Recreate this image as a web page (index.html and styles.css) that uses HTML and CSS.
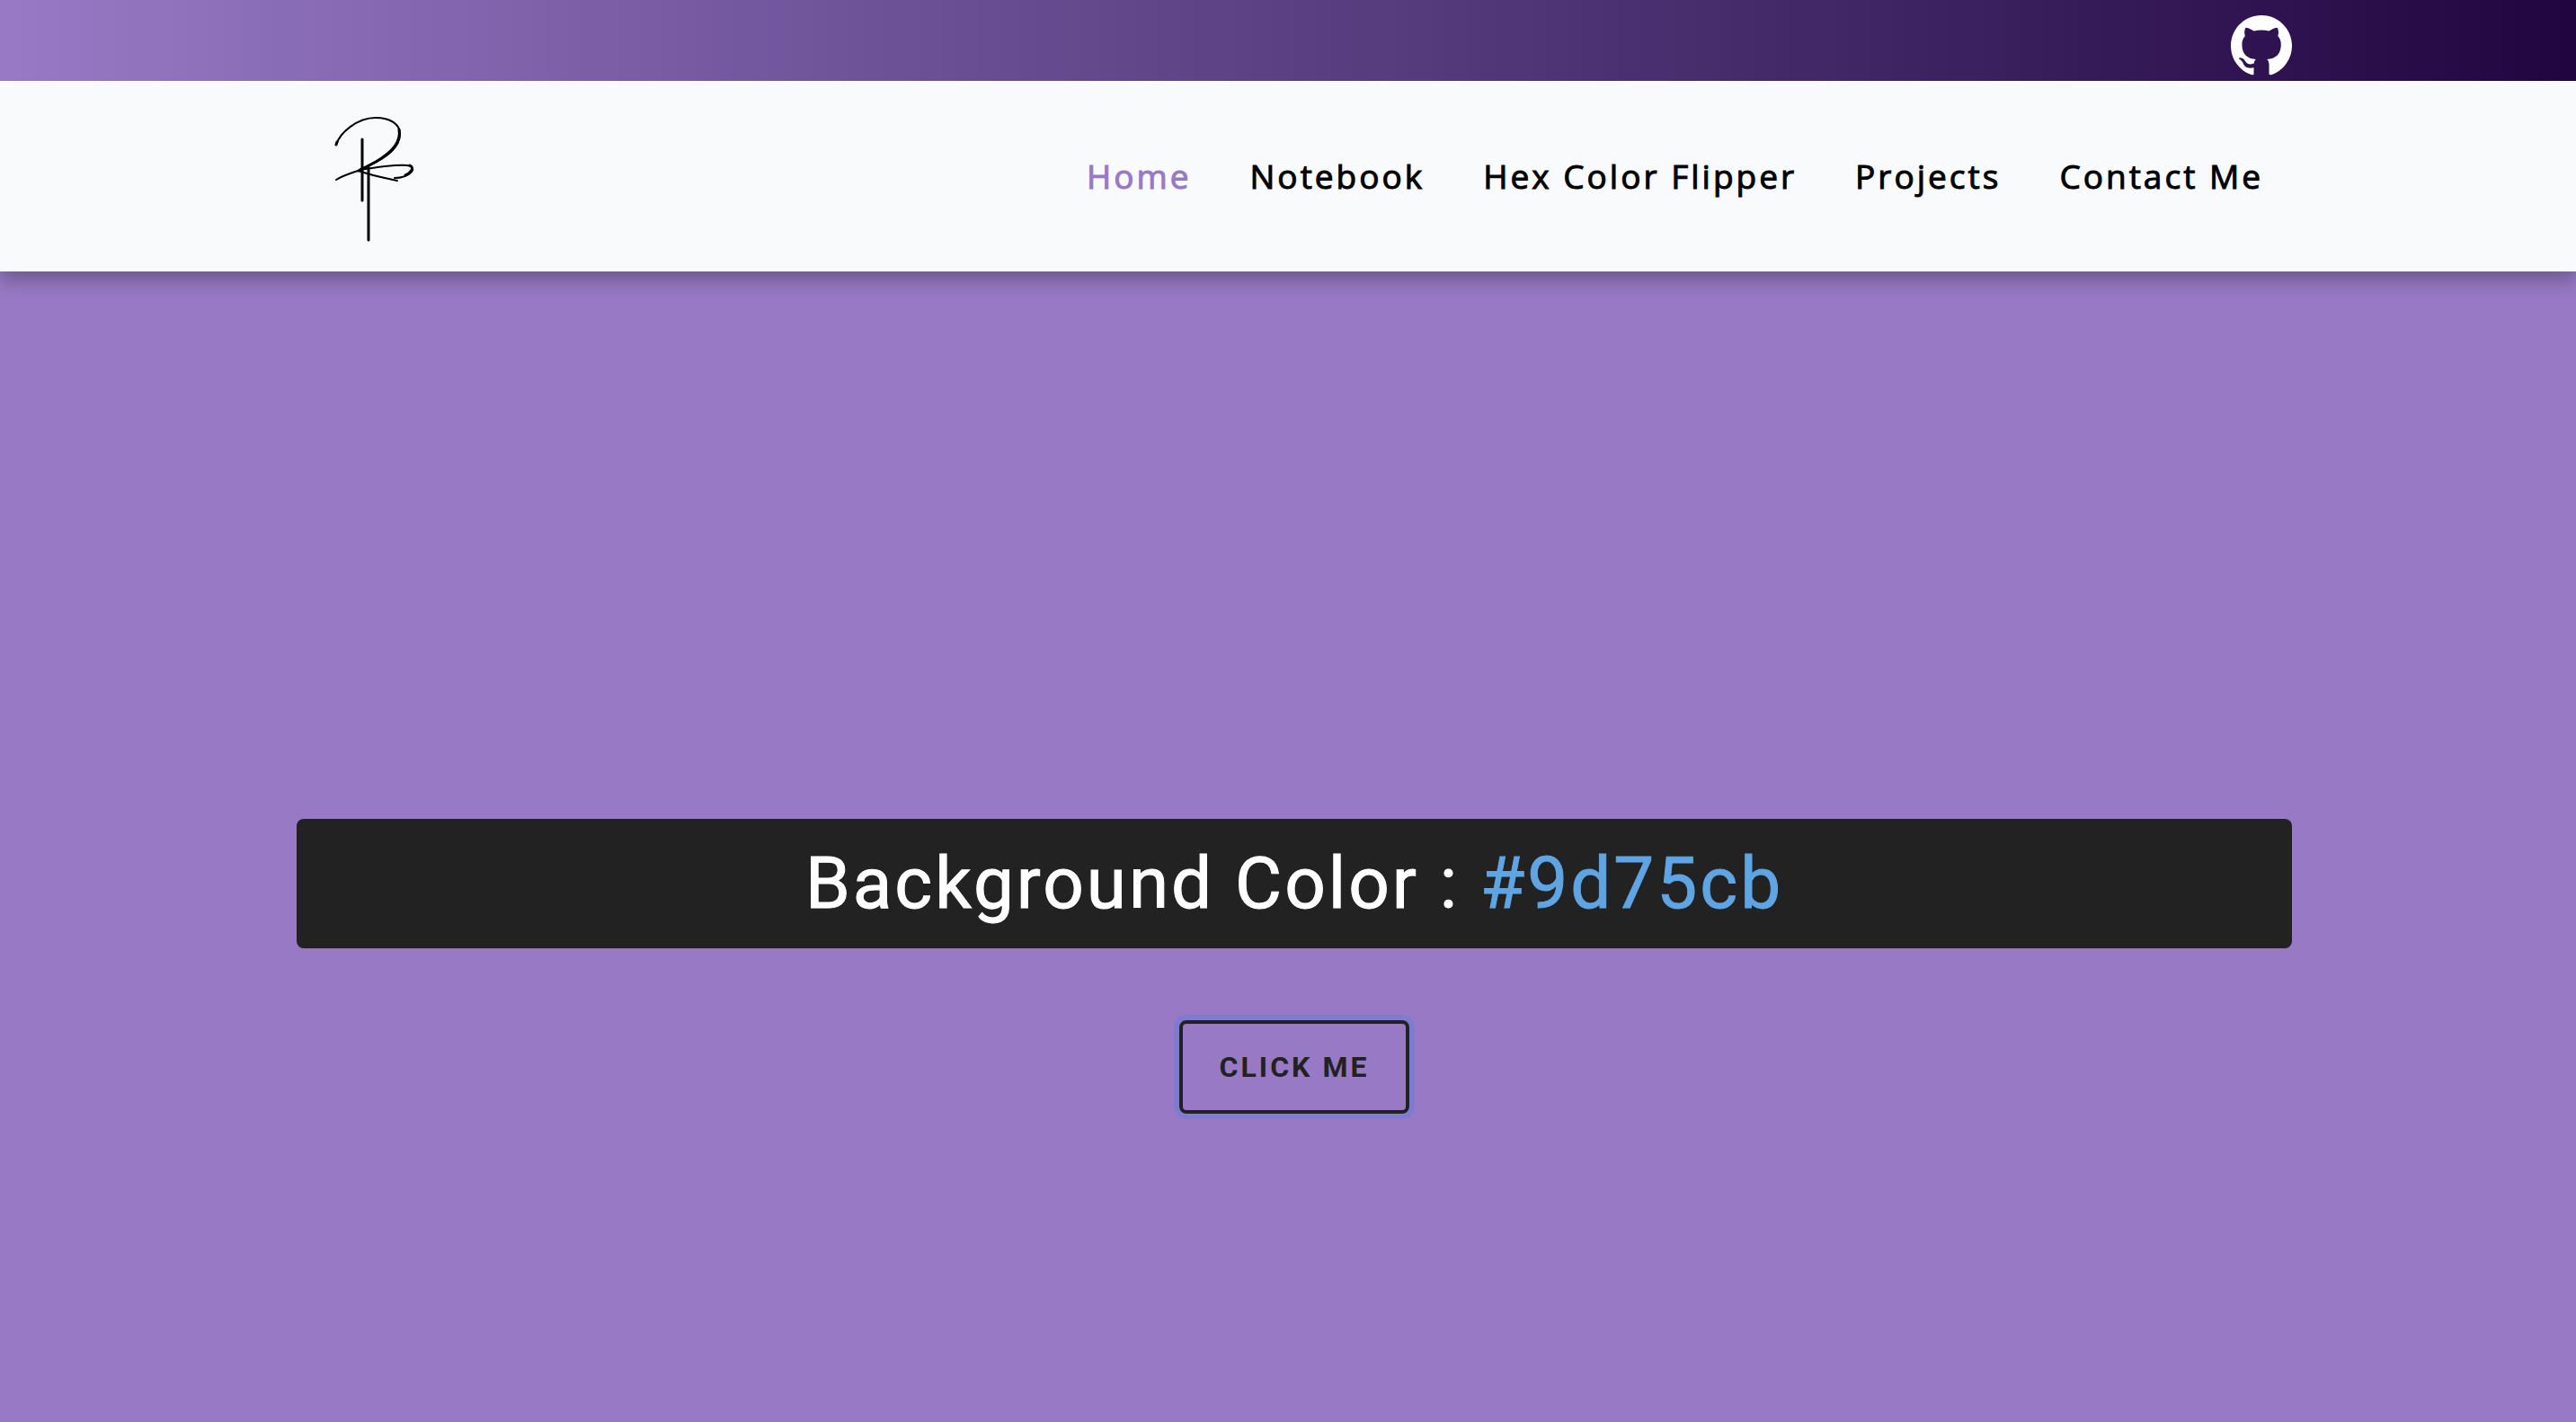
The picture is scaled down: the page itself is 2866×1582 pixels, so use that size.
FILE: index.html
```html
<!DOCTYPE html>
<html lang="en">
<head>
<meta charset="utf-8">
<meta name="viewport" content="width=device-width, initial-scale=1">
<title>Hex Color Flipper</title>
<link rel="stylesheet" href="styles.css">
</head>
<body>
<header class="site-header">
  <div class="topbar">
    <div class="container topbar-inner">
      <a class="social" href="#github" aria-label="GitHub">
        <svg viewBox="0 0 16 16" aria-hidden="true"><path fill="currentColor" d="M8 0C3.58 0 0 3.58 0 8c0 3.54 2.29 6.53 5.47 7.59.4.07.55-.17.55-.38 0-.19-.01-.82-.01-1.49-2.01.37-2.53-.49-2.69-.94-.09-.23-.48-.94-.82-1.13-.28-.15-.68-.52-.01-.53.63-.01 1.08.58 1.23.82.72 1.21 1.87.87 2.33.66.07-.52.28-.87.51-1.07-1.78-.2-3.64-.89-3.64-3.95 0-.87.31-1.59.82-2.15-.08-.2-.36-1.02.08-2.12 0 0 .67-.21 2.2.82.64-.18 1.32-.27 2-.27s1.36.09 2 .27c1.53-1.04 2.2-.82 2.2-.82.44 1.1.16 1.92.08 2.12.51.56.82 1.27.82 2.15 0 3.07-1.87 3.75-3.65 3.95.29.25.54.73.54 1.48 0 1.07-.01 1.93-.01 2.2 0 .21.15.46.55.38A8.01 8.01 0 0 0 16 8c0-4.42-3.58-8-8-8z"/></svg>
      </a>
    </div>
  </div>
  <div class="navbar">
    <div class="container navbar-inner">
      <a class="brand" href="#home" aria-label="Home page">
        <svg viewBox="0 0 130 170" fill="none" stroke="#000" stroke-linecap="round" stroke-linejoin="round" aria-hidden="true">
          <path stroke-width="2" d="M24 50C28 37 47 20 68 20C84 20 95 27 95 38C95 57 71 69 51 78"/>
          <path stroke-width="3" d="M24 50l1-3M94 33C97 49 82 61 68 69L51 78"/>
          <path stroke-width="3" d="M53 44V112M60 75V156"/>
          <path stroke-width="2" d="M24 89C34 83 43 81 51 78C69 75 88 72 103 73C117 75 105 87 89 87M49 79C62 84 78 87 92 90"/>
          <path stroke-width="3" d="M49 79l5-3M106 73C112 76 106 82 101 84"/>
        </svg>
      </a>
      <nav class="menu" aria-label="Main">
        <a class="menu-link active" href="#home">Home</a>
        <a class="menu-link" href="#notebook">Notebook</a>
        <a class="menu-link" href="#flipper">Hex Color Flipper</a>
        <a class="menu-link" href="#projects">Projects</a>
        <a class="menu-link" href="#contact">Contact Me</a>
      </nav>
    </div>
  </div>
</header>
<main class="flipper">
  <div class="container flipper-inner">
    <h2 class="readout">Background Color : <span class="color">#9d75cb</span></h2>
    <button class="flip-button" type="button">Click Me</button>
  </div>
</main>
</body>
</html>
```
FILE: styles.css
```css
* {
  box-sizing: border-box;
}

body {
  margin: 0;
  min-height: 100vh;
  display: flex;
  flex-direction: column;
  background: #9779c5;
  font-family: Roboto, "Liberation Sans", sans-serif;
}

.site-header {
  box-shadow: 0 10px 20px rgba(0, 0, 0, 0.27);
}

.topbar,
.navbar,
.flipper {
  padding-left: 14px;
}

.topbar {
  background: linear-gradient(90deg, #9779c5, #553a7c 55%, #200540);
}

.navbar {
  background: #f8fafc;
}

.container {
  width: calc(100% - 60px);
  max-width: 2220px;
  margin: 0 auto;
}

.topbar-inner {
  display: flex;
  justify-content: flex-end;
  height: 90px;
  padding-top: 17px;
}

.social {
  width: 68px;
  height: 68px;
  color: #fff;
}

.social svg,
.brand svg {
  display: block;
  width: 100%;
}

.navbar-inner {
  display: flex;
  justify-content: space-between;
  align-items: center;
  height: 212px;
  padding: 0 32px 0 20px;
}

.brand {
  width: 130px;
}

.menu {
  display: flex;
  gap: 65px;
}

.menu-link {
  color: #000;
  font: 400 37px/56px "Open Sans", sans-serif;
  letter-spacing: 3px;
  text-decoration: none;
  -webkit-text-stroke: 1px currentColor;
}

.menu-link.active {
  color: #9779c5;
}

.flipper {
  flex: 1;
  display: flex;
  align-items: center;
  padding-top: 266px;
}

.flipper-inner {
  display: flex;
  flex-direction: column;
  align-items: center;
  gap: 80px;
}

.readout {
  width: 100%;
  margin: 0;
  padding: 24px;
  border-radius: 8px;
  background: #222;
  color: #fff;
  font-size: 80px;
  font-weight: 400;
  line-height: 96px;
  letter-spacing: 3px;
  text-align: center;
  -webkit-text-stroke: 1px currentColor;
}

.color {
  color: #5fa4e3;
  -webkit-text-stroke-color: currentColor;
}

.flip-button {
  padding: 0 41px;
  height: 104px;
  border: 4px solid #222;
  border-radius: 8px;
  background: transparent;
  box-shadow: 0 0 0 6px #7e7bd0;
  color: #222;
  font: 700 32px/40px Roboto, sans-serif;
  letter-spacing: 3px;
  text-transform: uppercase;
}
```
